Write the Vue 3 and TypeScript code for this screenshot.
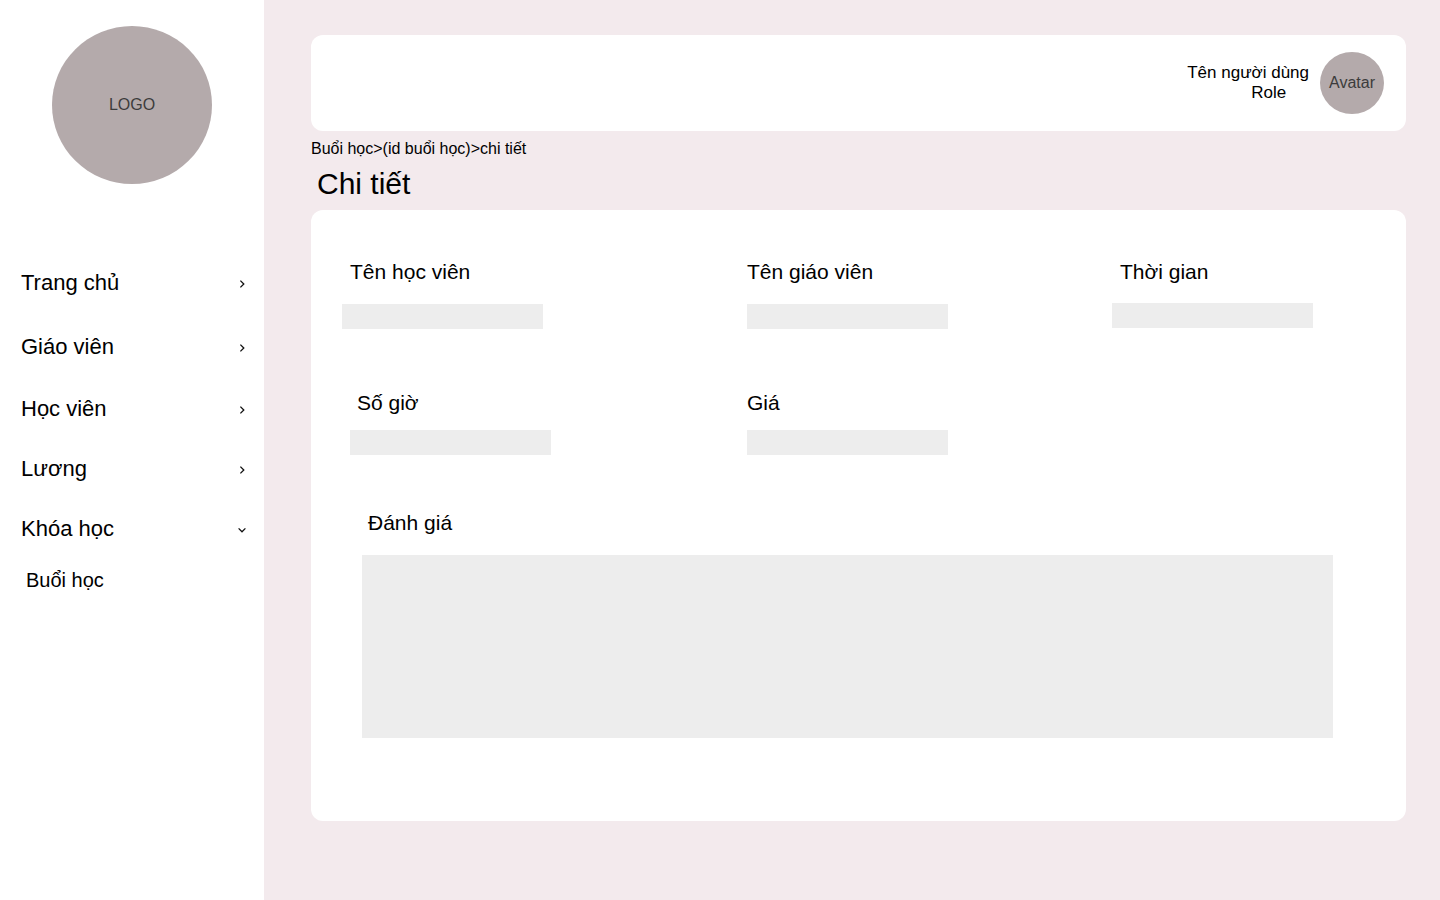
<script setup lang="ts">
interface NavItem {
  label: string
  open?: boolean
  children?: string[]
}

const navItems: NavItem[] = [
  { label: 'Trang chủ' },
  { label: 'Giáo viên' },
  { label: 'Học viên' },
  { label: 'Lương' },
  { label: 'Khóa học', open: true, children: ['Buổi học'] },
]

interface Field {
  key: string
  label: string
}

const fields: Field[] = [
  { key: 'student', label: 'Tên học viên' },
  { key: 'teacher', label: 'Tên giáo viên' },
  { key: 'time', label: 'Thời gian' },
  { key: 'hours', label: 'Số giờ' },
  { key: 'price', label: 'Giá' },
]
</script>

<template>
  <div class="layout">
    <aside class="sidebar">
      <div class="logo">LOGO</div>
      <nav class="nav">
        <template v-for="item in navItems" :key="item.label">
          <a class="nav-item">
            <span>{{ item.label }}</span>
            <svg class="chevron" :class="{ open: item.open }" viewBox="0 0 10 10">
              <path d="M3.4 1.6 L6.8 5 L3.4 8.4" />
            </svg>
          </a>
          <a v-for="child in item.children" :key="child" class="nav-child">{{ child }}</a>
        </template>
      </nav>
    </aside>

    <main class="main">
      <header class="topbar">
        <div class="user">
          <span>Tên người dùng</span>
          <span class="role">Role</span>
        </div>
        <div class="avatar">Avatar</div>
      </header>
      <div class="breadcrumb">Buổi học&gt;(id buổi học)&gt;chi tiết</div>
      <h1 class="title">Chi tiết</h1>
      <section class="card">
        <div class="fields">
          <div v-for="field in fields" :key="field.key" class="field" :class="field.key">
            <label class="label">{{ field.label }}</label>
            <div class="value"></div>
          </div>
        </div>
        <div class="review">
          <label class="label">Đánh giá</label>
          <div class="review-box"></div>
        </div>
      </section>
    </main>
  </div>
</template>

<style>
body {
  margin: 0;
}
</style>

<style scoped>
.layout {
  display: flex;
  width: 1440px;
  height: 900px;
  overflow: hidden;
  background: #f3eaed;
  color: #000;
  font-family: 'Liberation Sans', Arial, sans-serif;
}

.sidebar {
  flex: none;
  box-sizing: border-box;
  width: 264px;
  padding-top: 26px;
  background: #fff;
}

.logo,
.avatar {
  display: flex;
  align-items: center;
  justify-content: center;
  border-radius: 50%;
  background: #b4aaab;
  color: #3c3c3c;
  font-size: 16px;
  line-height: 18px;
}

.logo {
  width: 160px;
  height: 158px;
  margin: 0 auto;
}

.nav {
  display: grid;
  grid-template-rows: 64px 62px 60px 60px 52px 26px;
  margin-top: 86px;
  padding: 0 17px 0 21px;
}

.nav-item {
  display: flex;
  align-items: flex-start;
  justify-content: space-between;
  font-size: 22px;
  line-height: 26px;
}

.chevron {
  width: 10px;
  height: 10px;
  margin-top: 9px;
  fill: none;
  stroke: #111;
  stroke-width: 1.3;
}

.chevron.open {
  transform: rotate(90deg);
}

.nav-child {
  padding-left: 5px;
  font-size: 20px;
  line-height: 24px;
}

.main {
  flex: none;
  width: 1095px;
  padding: 35px 0 0 47px;
}

.topbar {
  display: flex;
  box-sizing: border-box;
  justify-content: flex-end;
  height: 96px;
  padding: 17px 22px 0 0;
  border-radius: 12px;
  background: #fff;
}

.user {
  display: flex;
  flex-direction: column;
  margin: 11px 11px 0 0;
  font-size: 17px;
  line-height: 20px;
}

.role {
  padding-left: 64px;
}

.avatar {
  width: 64px;
  height: 62px;
}

.breadcrumb {
  margin-top: 9px;
  font-size: 16px;
  line-height: 18px;
}

.title {
  margin: 9px 0 9px 6px;
  font-size: 30px;
  font-weight: 400;
  line-height: 34px;
}

.card {
  box-sizing: border-box;
  height: 611px;
  padding: 50px 31px 0;
  border-radius: 12px;
  background: #fff;
}

.fields {
  display: grid;
  grid-template-columns: 405px 365px 201px;
  grid-template-rows: 131px 120px;
}

.label {
  display: block;
  font-size: 21px;
  line-height: 24px;
}

.value {
  width: 201px;
  height: 25px;
  margin-top: 20px;
  background: #ededed;
}

.student .label,
.time .label {
  padding-left: 8px;
}

.time .value {
  margin-top: 19px;
}

.hours {
  padding-left: 8px;
}

.hours .label {
  padding-left: 7px;
}

.hours .value,
.price .value {
  margin-top: 15px;
}

.review {
  padding-left: 20px;
}

.review .label {
  padding-left: 6px;
}

.review-box {
  width: 971px;
  height: 183px;
  margin-top: 20px;
  background: #ededed;
}
</style>
